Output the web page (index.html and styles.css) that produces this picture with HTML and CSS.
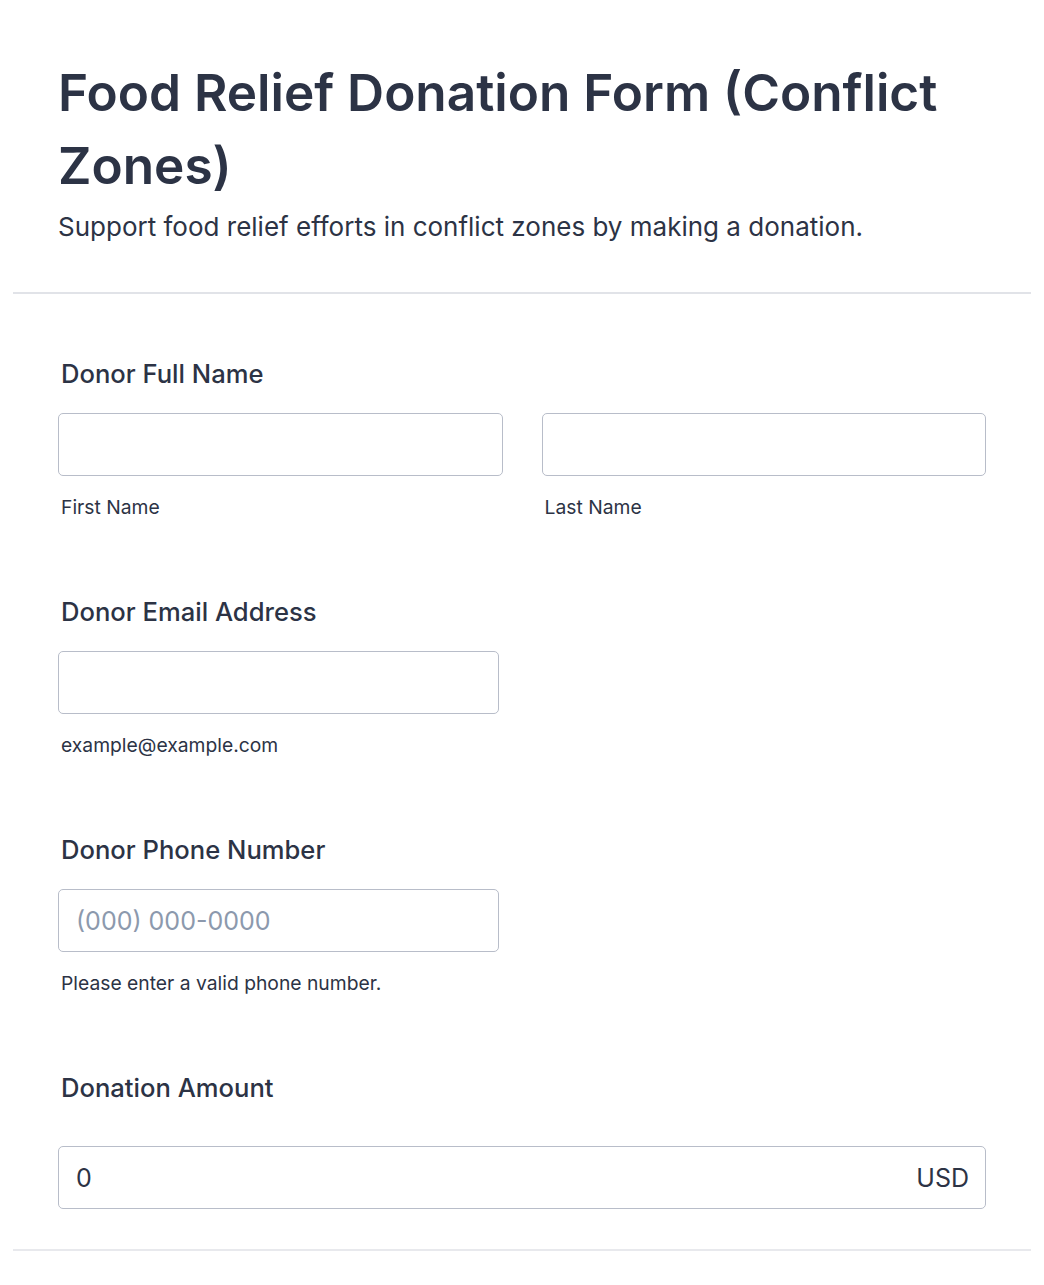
FILE: index.html
```html
<!DOCTYPE html>
<html lang="en">
<head>
<meta charset="utf-8">
<title>Food Relief Donation Form (Conflict Zones)</title>
<link rel="stylesheet" href="styles.css">
</head>
<body>
<div class="form">
  <header class="form-header">
    <h1 class="form-title">Food Relief Donation Form (Conflict Zones)</h1>
    <p class="form-subtitle">Support food relief efforts in conflict zones by making a donation.</p>
  </header>
  <div class="form-body">
    <div class="field">
      <label class="field-label">Donor Full Name</label>
      <div class="name-row">
        <div class="sub">
          <input class="input" type="text">
          <span class="sublabel">First Name</span>
        </div>
        <div class="sub">
          <input class="input" type="text">
          <span class="sublabel">Last Name</span>
        </div>
      </div>
    </div>
    <div class="field">
      <label class="field-label">Donor Email Address</label>
      <div class="sub half">
        <input class="input" type="email">
        <span class="sublabel">example@example.com</span>
      </div>
    </div>
    <div class="field">
      <label class="field-label">Donor Phone Number</label>
      <div class="sub half">
        <input class="input" type="tel" placeholder="(000) 000-0000">
        <span class="sublabel">Please enter a valid phone number.</span>
      </div>
    </div>
    <div class="field last">
      <label class="field-label amount-label">Donation Amount</label>
      <div class="amount">
        <span class="amount-value">0</span>
        <span class="amount-currency">USD</span>
      </div>
    </div>
  </div>
</div>
</body>
</html>
```

FILE: styles.css
```css
html, body {
  margin: 0;
  padding: 0;
  background: #ffffff;
}
body {
  font-family: Inter, "Noto Sans", sans-serif;
  color: #2c3345;
}
.form {
  padding: 0 13px;
}
.form-header {
  padding: 56px 45px 47px;
  border-bottom: 2px solid #e1e3e8;
}
.form-title {
  margin: 0;
  font-size: 51.3px;
  line-height: 73px;
  font-weight: 600;
  letter-spacing: 0;
}
.form-subtitle {
  margin: 7px 0 0;
  font-size: 26px;
  line-height: 36px;
  font-weight: 400;
}
.form-body {
  padding: 62px 45px 40px;
  border-bottom: 2px solid #e8e9ed;
}
.field {
  margin-bottom: 75px;
}
.field.last {
  margin-bottom: 0;
}
.field-label {
  display: block;
  padding-left: 3px;
  font-size: 25.6px;
  line-height: 36px;
  font-weight: 500;
  margin-bottom: 21px;
}
.field-label.amount-label {
  margin-bottom: 40px;
}
.name-row {
  display: flex;
  gap: 39px;
}
.sub {
  display: flex;
  flex-direction: column;
  flex: 1;
}
.sub.half {
  width: 441px;
  flex: none;
}
.input {
  box-sizing: border-box;
  height: 63px;
  width: 100%;
  border: 1px solid #b8bdc9;
  border-radius: 5px;
  padding: 0 17px;
  font-family: Inter, "Noto Sans", sans-serif;
  font-size: 25px;
  color: #2c3345;
  background: #fff;
  outline: none;
}
.input::placeholder {
  color: #8c99ad;
}
.sublabel {
  display: block;
  padding-left: 3px;
  margin-top: 19px;
  font-size: 19.3px;
  line-height: 24px;
}
.amount {
  box-sizing: border-box;
  height: 63px;
  border: 1px solid #b8bdc9;
  border-radius: 5px;
  padding: 0 16px 0 17px;
  display: flex;
  align-items: center;
  justify-content: space-between;
  font-size: 25px;
}
```
